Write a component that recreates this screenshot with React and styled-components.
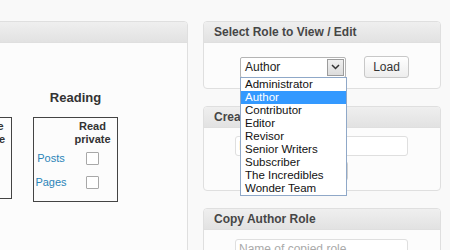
import styled, { createGlobalStyle } from "styled-components";

const GlobalStyle = createGlobalStyle`
  body {
    margin: 0;
    background: #f9f9f9;
    font-family: "Liberation Sans", Arial, sans-serif;
    font-size: 11px;
    color: #333;
    overflow: hidden;
  }
`;

const Page = styled.div`
  display: flex;
  align-items: flex-start;
  gap: 15px;
  padding-top: 21px;
  height: 229px;
`;

const Panel = styled.div`
  background: #fcfcfc;
  border: 1px solid #dfdfdf;
  border-radius: 4px;
`;

const LeftPanel = styled(Panel)`
  width: 286px;
  height: 260px;
  margin-left: -100px;
  flex-shrink: 0;
`;

const PanelHeader = styled.div`
  height: 20px;
  line-height: 20px;
  padding-left: 10px;
  border-bottom: 1px solid #dfdfdf;
  border-radius: 3px 3px 0 0;
  background: linear-gradient(to bottom, #efefef, #e2e2e2);
  font-size: 12px;
  font-weight: bold;
  color: #464646;
  white-space: nowrap;
`;

const Groups = styled.div`
  display: flex;
  gap: 21px;
  padding: 47px 0 0 20px;
`;

const Group = styled.div`
  display: flex;
  flex-direction: column;
  align-items: center;
`;

const GroupTitle = styled.div`
  font-size: 13px;
  font-weight: bold;
  line-height: 16px;
  color: #333;
  margin-bottom: 11px;
`;

const CapTable = styled.div`
  display: grid;
  grid-template-columns: ${(p) => p.$cols};
  grid-template-rows: 26px 24px 24px;
  border: 1px solid #444;
  padding: 2px 0 ${(p) => p.$pad}px;
`;

const HeadCell = styled.div`
  grid-column: 2;
  text-align: center;
  font-weight: bold;
  line-height: 13px;
  color: #333;
`;

const RowLabel = styled.a`
  grid-column: 1;
  display: flex;
  align-items: center;
  justify-content: center;
  color: #2a84b8;
  text-decoration: none;
  font-size: 11px;
`;

const CheckCell = styled.div`
  display: flex;
  align-items: center;
  justify-content: center;
`;

const Check = styled.span`
  width: 11px;
  height: 11px;
  border: 1px solid #a8a8a8;
  background: #fff;
  border-radius: 1px;
`;

const RightColumn = styled.div`
  width: 238px;
  display: flex;
  flex-direction: column;
  gap: 17px;
  flex-shrink: 0;
`;

const SelectBody = styled.div`
  display: flex;
  align-items: center;
  gap: 18px;
  padding: 13px 0 10px 36px;
`;

const SelectWrap = styled.div`
  position: relative;
`;

const SelectBox = styled.div`
  height: 19px;
  border: 1px solid #b4b4b4;
  border-radius: 2px;
  background: #fff;
  display: flex;
  align-items: center;
  justify-content: space-between;
  padding-left: 4px;
  box-sizing: content-box;
  width: ${(p) => p.$w}px;
  font-size: 12px;
  color: #222;
`;

const Arrow = styled.span`
  width: 15px;
  height: 15px;
  margin-right: 1px;
  border: 1px solid #9c9c9c;
  background: linear-gradient(to bottom, #f0f0f0, #dcdcdc);
  display: flex;
  align-items: center;
  justify-content: center;
`;

const DropList = styled.ul`
  position: absolute;
  top: 20px;
  left: 0;
  width: 105px;
  margin: 0;
  padding: 0;
  list-style: none;
  background: #fff;
  border: 1px solid #8fa8c8;
  z-index: 2;
`;

const Option = styled.li`
  height: 13px;
  line-height: 13px;
  padding-left: 4px;
  font-size: 11.5px;
  white-space: nowrap;
  color: ${(p) => (p.$active ? "#fff" : "#111")};
  background: ${(p) => (p.$active ? "#3399ff" : "transparent")};
`;

const Button = styled.button`
  width: 45px;
  height: 22px;
  border: 1px solid #c8c8c8;
  border-radius: 3px;
  background: linear-gradient(to bottom, #ffffff, #ededed);
  font-family: inherit;
  font-size: 12px;
  color: #333;
  padding: 0;
`;

const FormBody = styled.div`
  display: flex;
  flex-direction: column;
  gap: 5px;
  padding: ${(p) => p.$top}px 0 9px 31px;
`;

const TextInput = styled.input`
  width: 165px;
  height: 18px;
  border: 1px solid #dfdfdf;
  border-radius: 3px;
  background: #fff;
  padding: 0 3px;
  font-family: inherit;
  font-size: 12px;
  outline: none;
  &::placeholder {
    color: #aaa;
  }
`;

const SmallSelect = styled.div`
  margin-left: 5px;
  width: 106px;
  height: 18px;
  border: 1px solid #cfcfcf;
  border-radius: 3px;
  background: #fff;
`;

const roles = [
  "Administrator",
  "Author",
  "Contributor",
  "Editor",
  "Revisor",
  "Senior Writers",
  "Subscriber",
  "The Incredibles",
  "Wonder Team",
];

function CapGroup({ title, head, cols, pad }) {
  return (
    <Group>
      <GroupTitle>{title}</GroupTitle>
      <CapTable $cols={cols} $pad={pad}>
        <HeadCell>
          {head[0]}
          <br />
          {head[1]}
        </HeadCell>
        <RowLabel href="#">Posts</RowLabel>
        <CheckCell>
          <Check />
        </CheckCell>
        <RowLabel href="#">Pages</RowLabel>
        <CheckCell>
          <Check />
        </CheckCell>
      </CapTable>
    </Group>
  );
}

export default function App() {
  return (
    <>
      <GlobalStyle />
      <Page>
        <LeftPanel>
          <PanelHeader>Capabilities</PanelHeader>
          <Groups>
            <CapGroup title="Deleting" head={["Delete", "private"]} cols="41px 48px" pad={4} />
            <CapGroup title="Reading" head={["Read", "private"]} cols="34px 49px" pad={7} />
          </Groups>
        </LeftPanel>
        <RightColumn>
          <Panel>
            <PanelHeader>Select Role to View / Edit</PanelHeader>
            <SelectBody>
              <SelectWrap>
                <SelectBox $w={100}>
                  Author
                  <Arrow>
                    <svg width="9" height="6" viewBox="0 0 9 6">
                      <path d="M1 1 L4.5 4.5 L8 1" fill="none" stroke="#333" strokeWidth="1.5" />
                    </svg>
                  </Arrow>
                </SelectBox>
                <DropList>
                  {roles.map((r) => (
                    <Option key={r} $active={r === "Author"}>
                      {r}
                    </Option>
                  ))}
                </DropList>
              </SelectWrap>
              <Button>Load</Button>
            </SelectBody>
          </Panel>
          <Panel>
            <PanelHeader>Create New Role</PanelHeader>
            <FormBody $top={8}>
              <TextInput placeholder="Name of new role" />
              <SmallSelect />
            </FormBody>
          </Panel>
          <Panel>
            <PanelHeader>Copy Author Role</PanelHeader>
            <FormBody $top={9}>
              <TextInput placeholder="Name of copied role" />
            </FormBody>
          </Panel>
        </RightColumn>
      </Page>
    </>
  );
}
